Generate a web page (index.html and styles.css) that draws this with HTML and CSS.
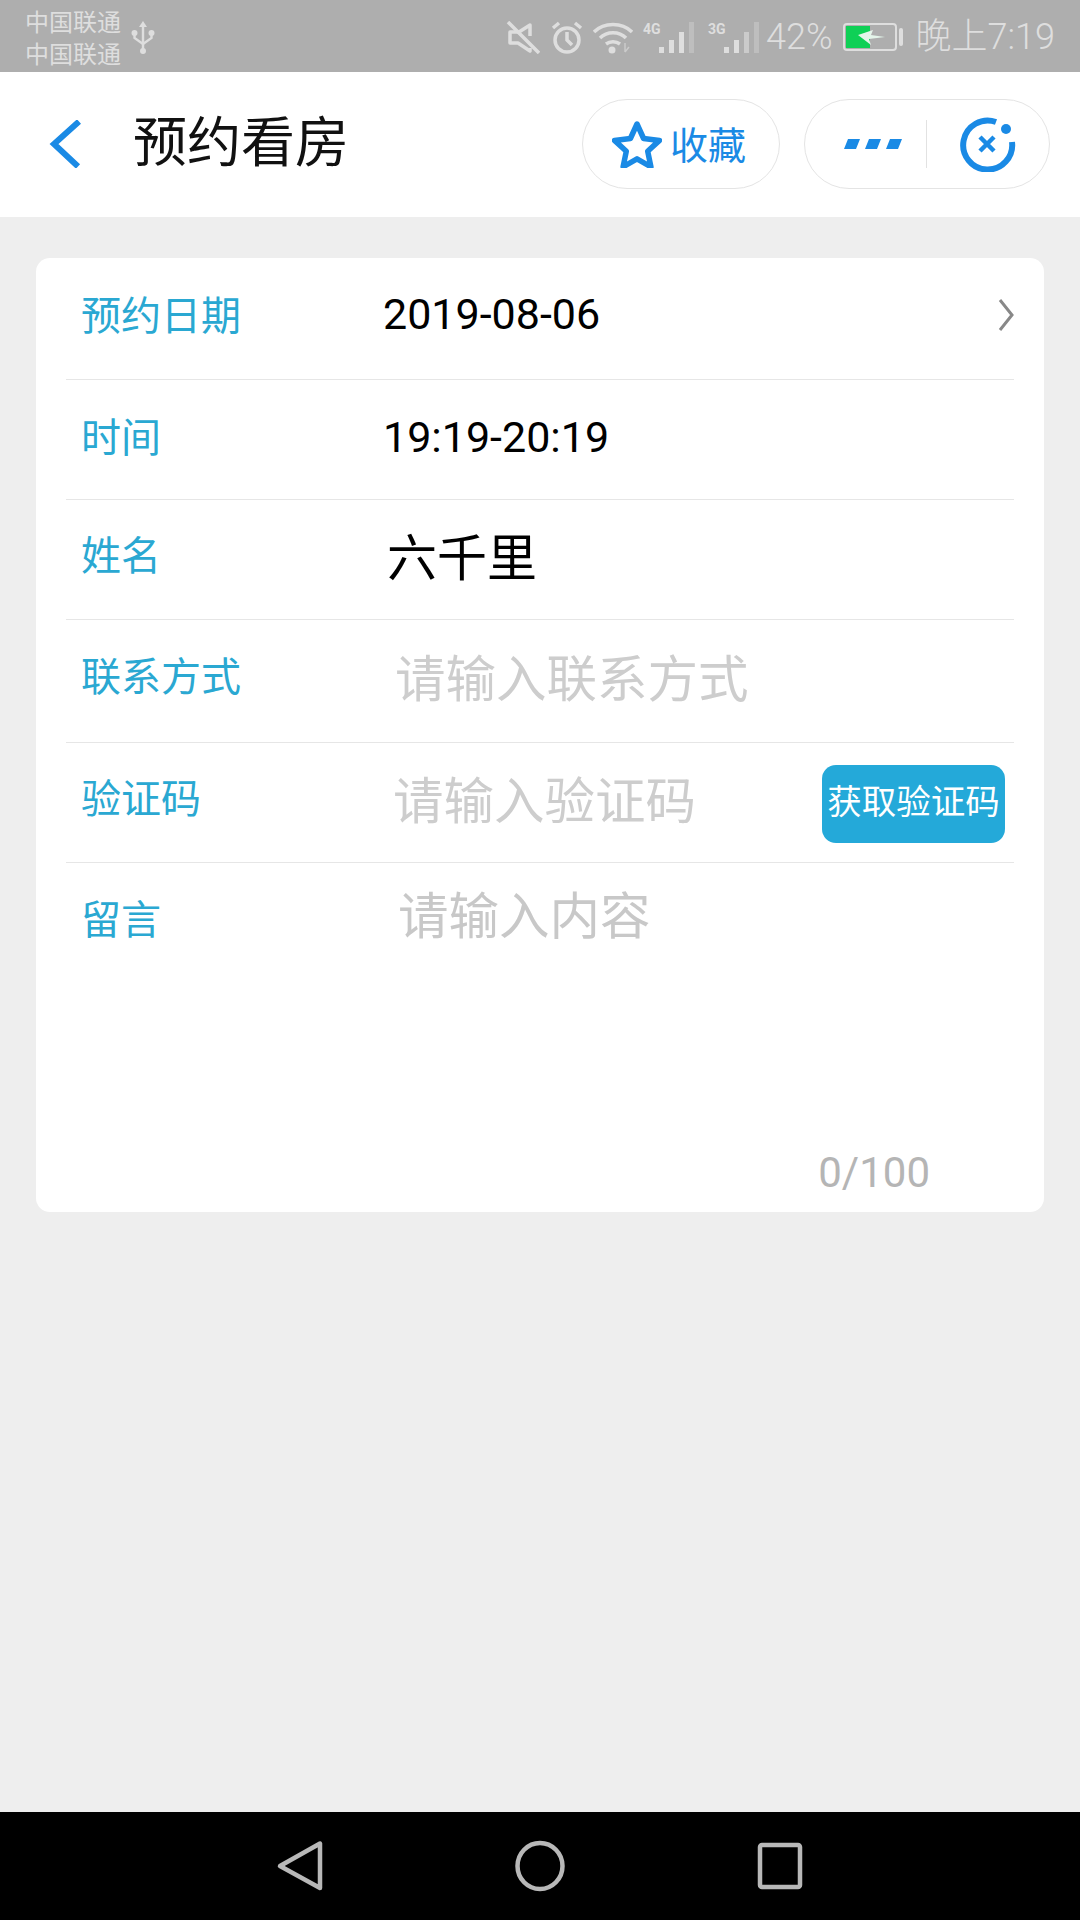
FILE: index.html
```html
<!DOCTYPE html>
<html lang="zh-CN">
<head>
    <meta charset="UTF-8">
    <title>预约看房</title>
    <link rel="stylesheet" href="styles.css">
</head>
<body>
    <!-- status bar -->
    <div class="status-bar">
        <div class="carriers">
            <span>中国联通</span>
            <span>中国联通</span>
        </div>
        <svg class="usb" width="24" height="34" viewBox="0 0 24 34" fill="none" stroke="#dedede" stroke-width="2.4">
            <path d="M12 4V30"/>
            <path d="M12 0l4 6H8z" fill="#dedede" stroke="none"/>
            <circle cx="12" cy="30" r="3" fill="#dedede" stroke="none"/>
            <circle cx="3.5" cy="12" r="3" fill="#dedede" stroke="none"/>
            <circle cx="20.5" cy="12" r="3" fill="#dedede" stroke="none"/>
            <path d="M3.5 13v4l8.5 6M20.5 13v4l-8.5 6"/>
        </svg>
        <div class="status-right">
            <svg class="st-mute" width="34" height="33" viewBox="0 0 34 33" fill="none" stroke="#dedede" stroke-width="3.500" stroke-linejoin="round">
                <path d="M2 1L33 32"/>
                <path d="M24 15V4L13 11H4v11h8l12 8v-3"/>
            </svg>
            <svg class="st-alarm" width="32" height="33" viewBox="0 0 32 33" fill="none" stroke="#dedede" stroke-width="3.500">
                <circle cx="16" cy="19" r="12"/>
                <path d="M16 11v8l5 5M2 7l6-5M30 7l-6-5"/>
            </svg>
            <svg class="st-wifi" width="40" height="33" viewBox="0 0 40 33" fill="none" stroke="#dedede" stroke-width="3.500">
                <path d="M1 11C11 1 29 1 39 11M7 17c7-7 19-7 26 0M13 23c4-3 10-3 14 0"/>
                <circle cx="19" cy="29" r="3.500" fill="#dedede" stroke="none"/>
                <path d="M32 22v9M36 26l-4 5" stroke-width="1.500" opacity=".6"/>
            </svg>
            <div class="st-signal">
                <span class="net">4G</span>
                <svg width="35" height="33" viewBox="0 0 35 33" fill="#dedede">
                    <rect x="0" y="26" width="5" height="6"/>
                    <rect x="10" y="19" width="5" height="13"/>
                    <rect x="20" y="11" width="5" height="21"/>
                    <rect x="30" y="1" width="5" height="31" opacity=".35"/>
                </svg>
            </div>
            <div class="st-signal st-signal-2">
                <span class="net">3G</span>
                <svg width="35" height="33" viewBox="0 0 35 33" fill="#dedede">
                    <rect x="0" y="26" width="5" height="6"/>
                    <rect x="10" y="19" width="5" height="13"/>
                    <rect x="20" y="11" width="5" height="21" opacity=".6"/>
                    <rect x="30" y="1" width="5" height="31" opacity=".35"/>
                </svg>
            </div>
            <span class="st-pct">42%</span>
            <svg class="st-batt" width="60" height="28" viewBox="0 0 60 28">
                <rect x="1" y="1" width="52" height="26" rx="3" fill="none" stroke="#dedede" stroke-width="2"/>
                <rect x="3" y="3" width="24" height="22" fill="#0fd056"/>
                <path d="M15 12l15-5-2 5 14 2-16 2 2 6z" fill="#e4f5ea"/>
                <rect x="56" y="5" width="4" height="18" rx="2" fill="#dedede"/>
            </svg>
            <span class="st-time">晚上7:19</span>
        </div>
    </div>

    <!-- title bar -->
    <header class="title-bar">
        <svg class="back" width="32" height="48" viewBox="0 0 32 48" fill="none" stroke="#1a8ae5" stroke-width="6">
            <path d="M30 1.500L5 24l24 22.500"/>
        </svg>
        <h1>预约看房</h1>
        <div class="pill pill-fav">
            <svg width="50" height="47" viewBox="0 0 50 47" fill="none" stroke="#1a8ae5" stroke-width="5.500" stroke-linejoin="round">
                <path d="M25 3l6.600 14.500 15.900 1.900-11.800 10.800 3.200 15.600L25 37.900 11.100 45.800l3.200-15.600L2.500 19.400l15.900-1.900z"/>
            </svg>
            <span>收藏</span>
        </div>
        <div class="pill pill-menu">
            <svg class="dots" width="58" height="10" viewBox="0 0 58 10" fill="#1a8ae5">
                <path d="M4 0h12l-4 10H0zM25 0h12l-4 10H21zM46 0h12l-4 10H42z"/>
            </svg>
            <i class="pill-line"></i>
            <svg class="close-app" width="56" height="56" viewBox="0 0 56 56" fill="none" stroke="#1a8ae5">
                <path d="M36 6A24.500 24.500 0 1 0 52 26" stroke-width="6"/>
                <circle cx="46" cy="13" r="5" fill="#1a8ae5" stroke="none"/>
                <path d="M20 21l14 14M34 21L20 35" stroke-width="4.500"/>
            </svg>
        </div>
    </header>

    <main>
        <form class="card">
            <div class="row row-date">
                <label>预约日期</label>
                <span class="value num">2019-08-06</span>
                <svg class="arrow" width="16" height="32" viewBox="0 0 16 32" fill="none" stroke="#888" stroke-width="3">
                    <path d="M2 1l12 15L2 31"/>
                </svg>
            </div>
            <div class="row row-time">
                <label>时间</label>
                <span class="value num">19:19-20:19</span>
            </div>
            <div class="row row-name">
                <label>姓名</label>
                <span class="value big">六千里</span>
            </div>
            <div class="row row-phone">
                <label>联系方式</label>
                <span class="hint">请输入联系方式</span>
            </div>
            <div class="row row-code">
                <label>验证码</label>
                <span class="hint">请输入验证码</span>
                <button type="button" class="code-btn">获取验证码</button>
            </div>
            <div class="row-msg">
                <div class="msg-top">
                    <label>留言</label>
                    <span class="hint">请输入内容</span>
                </div>
                <span class="count">0/100</span>
            </div>
        </form>
    </main>

    <!-- android nav -->
    <div class="nav-bar">
        <svg width="52" height="52" viewBox="0 0 52 52" fill="none" stroke="#b8b8b8" stroke-width="4.500" stroke-linejoin="round">
            <path d="M46 3.500V48L6 26z"/>
        </svg>
        <svg width="52" height="52" viewBox="0 0 52 52" fill="none" stroke="#b8b8b8" stroke-width="4.500">
            <ellipse cx="26" cy="26" rx="22.500" ry="23"/>
        </svg>
        <svg width="52" height="52" viewBox="0 0 52 52" fill="none" stroke="#b8b8b8" stroke-width="4.500" stroke-linejoin="round">
            <rect x="6" y="5" width="40" height="42" rx="2"/>
        </svg>
    </div>
</body>
</html>
```

FILE: styles.css
```css
* {
    box-sizing: border-box;
}
body {
    margin: 0;
    width: 1080px;
    height: 1920px;
    display: flex;
    flex-direction: column;
    background-color: #eee;
    font-family: Roboto, "Noto Sans CJK SC", sans-serif;
}

/* status bar */
.status-bar {
    height: 72px;
    flex: none;
    display: flex;
    align-items: center;
    padding: 0 25px 0 25px;
    background-color: #aeaeae;
    color: #dedede;
}
.carriers {
    display: flex;
    flex-direction: column;
    margin-top: 5px;
    font-size: 24px;
    line-height: 32px;
    white-space: nowrap;
}
.usb {
    margin: 4px 0 0 10px;
}
.status-right {
    margin: 2px 0 0 auto;
    display: flex;
    align-items: center;
}
.st-alarm {
    margin-left: 11px;
}
.st-wifi {
    margin-left: 10px;
}
.st-signal {
    position: relative;
    width: 51px;
    height: 33px;
    margin-left: 10px;
    display: flex;
    justify-content: flex-end;
}
.st-signal-2 {
    margin-left: 14px;
}
.net {
    position: absolute;
    left: 0;
    top: -1px;
    font-size: 14px;
    line-height: 18px;
    font-weight: 700;
}
.st-pct {
    margin-left: 7px;
    font-size: 36px;
    font-weight: 300;
    line-height: 44px;
}
.st-batt {
    margin-left: 10px;
}
.st-time {
    margin-left: 13px;
    font-size: 36px;
    font-weight: 300;
    line-height: 44px;
    white-space: nowrap;
}

/* title bar */
.title-bar {
    height: 145px;
    flex: none;
    display: flex;
    align-items: center;
    padding: 0 30px 1px 49px;
    background-color: #fff;
}
.title-bar h1 {
    margin: 0 0 0 52px;
    font-size: 54px;
    line-height: 64px;
    font-weight: 400;
    color: #111;
}
.pill {
    height: 90px;
    display: flex;
    align-items: center;
    border: 1px solid #e4e4e4;
    border-radius: 45px;
    background-color: #fff;
}
.pill-fav {
    width: 198px;
    margin-left: auto;
    padding-left: 29px;
    color: #1a8ae5;
    font-size: 38px;
    line-height: 44px;
}
.pill-fav span {
    margin: 4px 0 0 8px;
}
.pill-menu {
    width: 246px;
    margin-left: 24px;
    padding-left: 39px;
}
.pill-line {
    width: 1px;
    height: 48px;
    margin-left: 24px;
    background-color: #e2e2e2;
}
.close-app {
    margin-left: 33px;
}

/* form */
main {
    flex: 1;
    padding: 41px 36px 0;
}
.card {
    height: 954px;
    display: flex;
    flex-direction: column;
    background-color: #fff;
    border-radius: 14px;
}
.row {
    height: 120px;
    margin: 0 30px;
    padding-left: 15px;
    display: flex;
    align-items: center;
    border-bottom: 1px solid #e6e6e6;
    flex: none;
}
.row label,
.msg-top label {
    width: 302px;
    flex: none;
    font-size: 40px;
    line-height: 48px;
    color: #2aa8d2;
}
.row label {
    margin-top: 2px;
}
.row-date {
    height: 122px;
    padding-bottom: 5px;
}
.row-date .num {
    margin-bottom: 4px;
}
.row-time {
    padding-bottom: 5px;
}
.row-time label {
    margin-top: 4px;
}
.row-name {
    padding-bottom: 7px;
}
.row-phone {
    height: 123px;
    padding-bottom: 9px;
}
.row-code {
    padding-bottom: 8px;
}
.value {
    color: #000;
}
.num {
    font-size: 43px;
    line-height: 52px;
}
.big {
    margin: 6px 0 0 4px;
    font-size: 50px;
    line-height: 60px;
}
.arrow {
    margin: 0 0 2px auto;
}
.hint {
    font-size: 50.500px;
    line-height: 60px;
    color: #cdcdcd;
}
.row-phone .hint {
    margin: 6px 0 0 12px;
}
.row-code .hint {
    margin: 6px 0 0 10px;
}
.code-btn {
    width: 183px;
    height: 78px;
    margin: 10px 9px 0 auto;
    padding: 0 0 10px;
    border: none;
    border-radius: 14px;
    background-color: #24a9d9;
    color: #fff;
    font-family: inherit;
    font-size: 34.500px;
}
.row-msg {
    flex: 1;
    margin: 0 30px;
    padding-left: 15px;
    display: flex;
    flex-direction: column;
}
.msg-top {
    display: flex;
    align-items: flex-start;
}
.msg-top label {
    margin-top: 34px;
}
.msg-top .hint {
    margin: 24px 0 0 15px;
    color: #c8c8c8;
}
.count {
    margin: auto 84px 15px 0;
    align-self: flex-end;
    font-size: 42px;
    line-height: 48px;
    color: #b5b5b5;
}

/* android nav */
.nav-bar {
    height: 108px;
    flex: none;
    display: flex;
    justify-content: center;
    align-items: center;
    gap: 188px;
    background-color: #000;
}
```
